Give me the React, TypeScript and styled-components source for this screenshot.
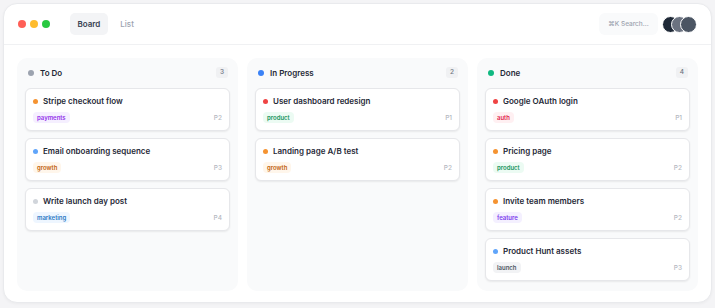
import React from "react";
import styled, { createGlobalStyle } from "styled-components";

const GlobalStyle = createGlobalStyle`
  html, body {
    margin: 0;
    padding: 0;
    background: #f4f4f6;
    font-family: Inter, "Liberation Sans", sans-serif;
    -webkit-font-smoothing: antialiased;
  }
`;

type Priority = "P1" | "P2" | "P3" | "P4";
type TagKind =
  | "payments"
  | "growth"
  | "marketing"
  | "product"
  | "auth"
  | "feature"
  | "launch";

interface Task {
  title: string;
  tag: TagKind;
  priority: Priority;
}

interface Column {
  title: string;
  dot: string;
  tasks: Task[];
}

const priorityColor: Record<Priority, string> = {
  P1: "#ef4444",
  P2: "#f59331",
  P3: "#60a5fa",
  P4: "#d1d5db",
};

const tagColors: Record<TagKind, { bg: string; fg: string }> = {
  payments: { bg: "#f5efff", fg: "#9333ea" },
  growth: { bg: "#fff6eb", fg: "#c2620c" },
  marketing: { bg: "#eef6ff", fg: "#2b78c5" },
  product: { bg: "#ecfbf3", fg: "#15935b" },
  auth: { bg: "#fff0f2", fg: "#e11d48" },
  feature: { bg: "#f4f0ff", fg: "#7c3aed" },
  launch: { bg: "#f2f3f5", fg: "#4b5563" },
};

const columns: Column[] = [
  {
    title: "To Do",
    dot: "#9ca3af",
    tasks: [
      { title: "Stripe checkout flow", tag: "payments", priority: "P2" },
      { title: "Email onboarding sequence", tag: "growth", priority: "P3" },
      { title: "Write launch day post", tag: "marketing", priority: "P4" },
    ],
  },
  {
    title: "In Progress",
    dot: "#3b82f6",
    tasks: [
      { title: "User dashboard redesign", tag: "product", priority: "P1" },
      { title: "Landing page A/B test", tag: "growth", priority: "P2" },
    ],
  },
  {
    title: "Done",
    dot: "#10b981",
    tasks: [
      { title: "Google OAuth login", tag: "auth", priority: "P1" },
      { title: "Pricing page", tag: "product", priority: "P2" },
      { title: "Invite team members", tag: "feature", priority: "P2" },
      { title: "Product Hunt assets", tag: "launch", priority: "P3" },
    ],
  },
];

const Page = styled.div`
  padding: 3px;
`;

const Window = styled.div`
  height: 300px;
  box-sizing: border-box;
  background: #fff;
  border: 1px solid #e9eaed;
  border-radius: 14px;
  box-shadow: 0 1px 3px rgba(0, 0, 0, 0.04);
  display: flex;
  flex-direction: column;
  overflow: hidden;
`;

const Header = styled.header`
  height: 40px;
  flex: none;
  display: flex;
  align-items: center;
  padding: 0 14px;
  border-bottom: 1px solid #f0f1f3;
`;

const Lights = styled.div`
  display: flex;
  gap: 4px;
  margin-right: 20px;
`;

const Light = styled.span<{ $color: string }>`
  width: 8px;
  height: 8px;
  border-radius: 50%;
  background: ${(p) => p.$color};
`;

const Tabs = styled.nav`
  display: flex;
  gap: 5px;
`;

const Tab = styled.button<{ $active?: boolean }>`
  height: 22px;
  padding: 0 7.5px;
  border: none;
  border-radius: 5px;
  font-family: inherit;
  font-size: 8px;
  font-weight: ${(p) => (p.$active ? 600 : 500)};
  color: ${(p) => (p.$active ? "#374151" : "#9ca3af")};
  background: ${(p) => (p.$active ? "#f3f4f6" : "transparent")};
`;

const Spacer = styled.div`
  flex: 1;
`;

const Search = styled.div`
  height: 22px;
  width: 59px;
  box-sizing: border-box;
  display: flex;
  align-items: center;
  justify-content: center;
  border-radius: 6px;
  background: #f9fafb;
  font-size: 6.5px;
  font-weight: 500;
  color: #9ca3af;
  margin-right: 4px;
`;

const Avatars = styled.div`
  display: flex;
`;

const Avatar = styled.span<{ $color: string }>`
  width: 17px;
  height: 17px;
  box-sizing: border-box;
  border-radius: 50%;
  border: 1.5px solid #fff;
  background: ${(p) => p.$color};
  & + & {
    margin-left: -8px;
  }
`;

const Board = styled.main`
  flex: 1;
  display: grid;
  grid-template-columns: repeat(3, 1fr);
  gap: 9px;
  padding: 13px 13px 11px;
`;

const Lane = styled.section`
  background: #f9fafb;
  border-radius: 10px;
  padding: 9px 8px 8px;
  display: flex;
  flex-direction: column;
`;

const LaneHeader = styled.div`
  height: 11px;
  display: flex;
  align-items: center;
  padding: 0 2px 0 3px;
  margin-bottom: 10px;
`;

const LaneDot = styled.span<{ $color: string }>`
  width: 6px;
  height: 6px;
  border-radius: 50%;
  background: ${(p) => p.$color};
  margin-right: 6px;
`;

const LaneTitle = styled.h2`
  flex: 1;
  margin: 0;
  font-size: 8px;
  font-weight: 600;
  color: #1f2937;
`;

const Count = styled.span`
  min-width: 12px;
  height: 11px;
  line-height: 11px;
  text-align: center;
  border-radius: 3px;
  background: #f0f1f3;
  font-size: 6.5px;
  font-weight: 500;
  color: #6b7280;
`;

const Cards = styled.div`
  display: flex;
  flex-direction: column;
  gap: 7px;
`;

const Card = styled.article`
  background: #fff;
  border: 1px solid #e6e7ea;
  border-radius: 6px;
  padding: 7px;
  box-shadow: 0 1px 2px rgba(0, 0, 0, 0.07);
  display: flex;
  flex-direction: column;
  gap: 6px;
`;

const CardTitle = styled.div`
  height: 10px;
  display: flex;
  align-items: center;
  gap: 5px;
  font-size: 8px;
  font-weight: 600;
  color: #1f2937;
`;

const PriorityDot = styled.span<{ $color: string }>`
  width: 5px;
  height: 5px;
  border-radius: 50%;
  background: ${(p) => p.$color};
`;

const CardFoot = styled.div`
  display: flex;
  align-items: center;
  justify-content: space-between;
`;

const Tag = styled.span<{ $bg: string; $fg: string }>`
  height: 11px;
  line-height: 11px;
  padding: 0 4px;
  border-radius: 4px;
  font-size: 6px;
  font-weight: 600;
  background: ${(p) => p.$bg};
  color: ${(p) => p.$fg};
`;

const PriorityLabel = styled.span`
  font-size: 6.5px;
  font-weight: 500;
  color: #b4b8bf;
`;

export default function App() {
  return (
    <Page>
      <GlobalStyle />
      <Window>
        <Header>
          <Lights>
            <Light $color="#ff5f57" />
            <Light $color="#febc2e" />
            <Light $color="#28c840" />
          </Lights>
          <Tabs>
            <Tab $active>Board</Tab>
            <Tab>List</Tab>
          </Tabs>
          <Spacer />
          <Search>⌘K Search...</Search>
          <Avatars>
            <Avatar $color="#1f2937" />
            <Avatar $color="#6b7280" />
            <Avatar $color="#4b5563" />
          </Avatars>
        </Header>
        <Board>
          {columns.map((col) => (
            <Lane key={col.title}>
              <LaneHeader>
                <LaneDot $color={col.dot} />
                <LaneTitle>{col.title}</LaneTitle>
                <Count>{col.tasks.length}</Count>
              </LaneHeader>
              <Cards>
                {col.tasks.map((t) => (
                  <Card key={t.title}>
                    <CardTitle>
                      <PriorityDot $color={priorityColor[t.priority]} />
                      {t.title}
                    </CardTitle>
                    <CardFoot>
                      <Tag $bg={tagColors[t.tag].bg} $fg={tagColors[t.tag].fg}>
                        {t.tag}
                      </Tag>
                      <PriorityLabel>{t.priority}</PriorityLabel>
                    </CardFoot>
                  </Card>
                ))}
              </Cards>
            </Lane>
          ))}
        </Board>
      </Window>
    </Page>
  );
}
